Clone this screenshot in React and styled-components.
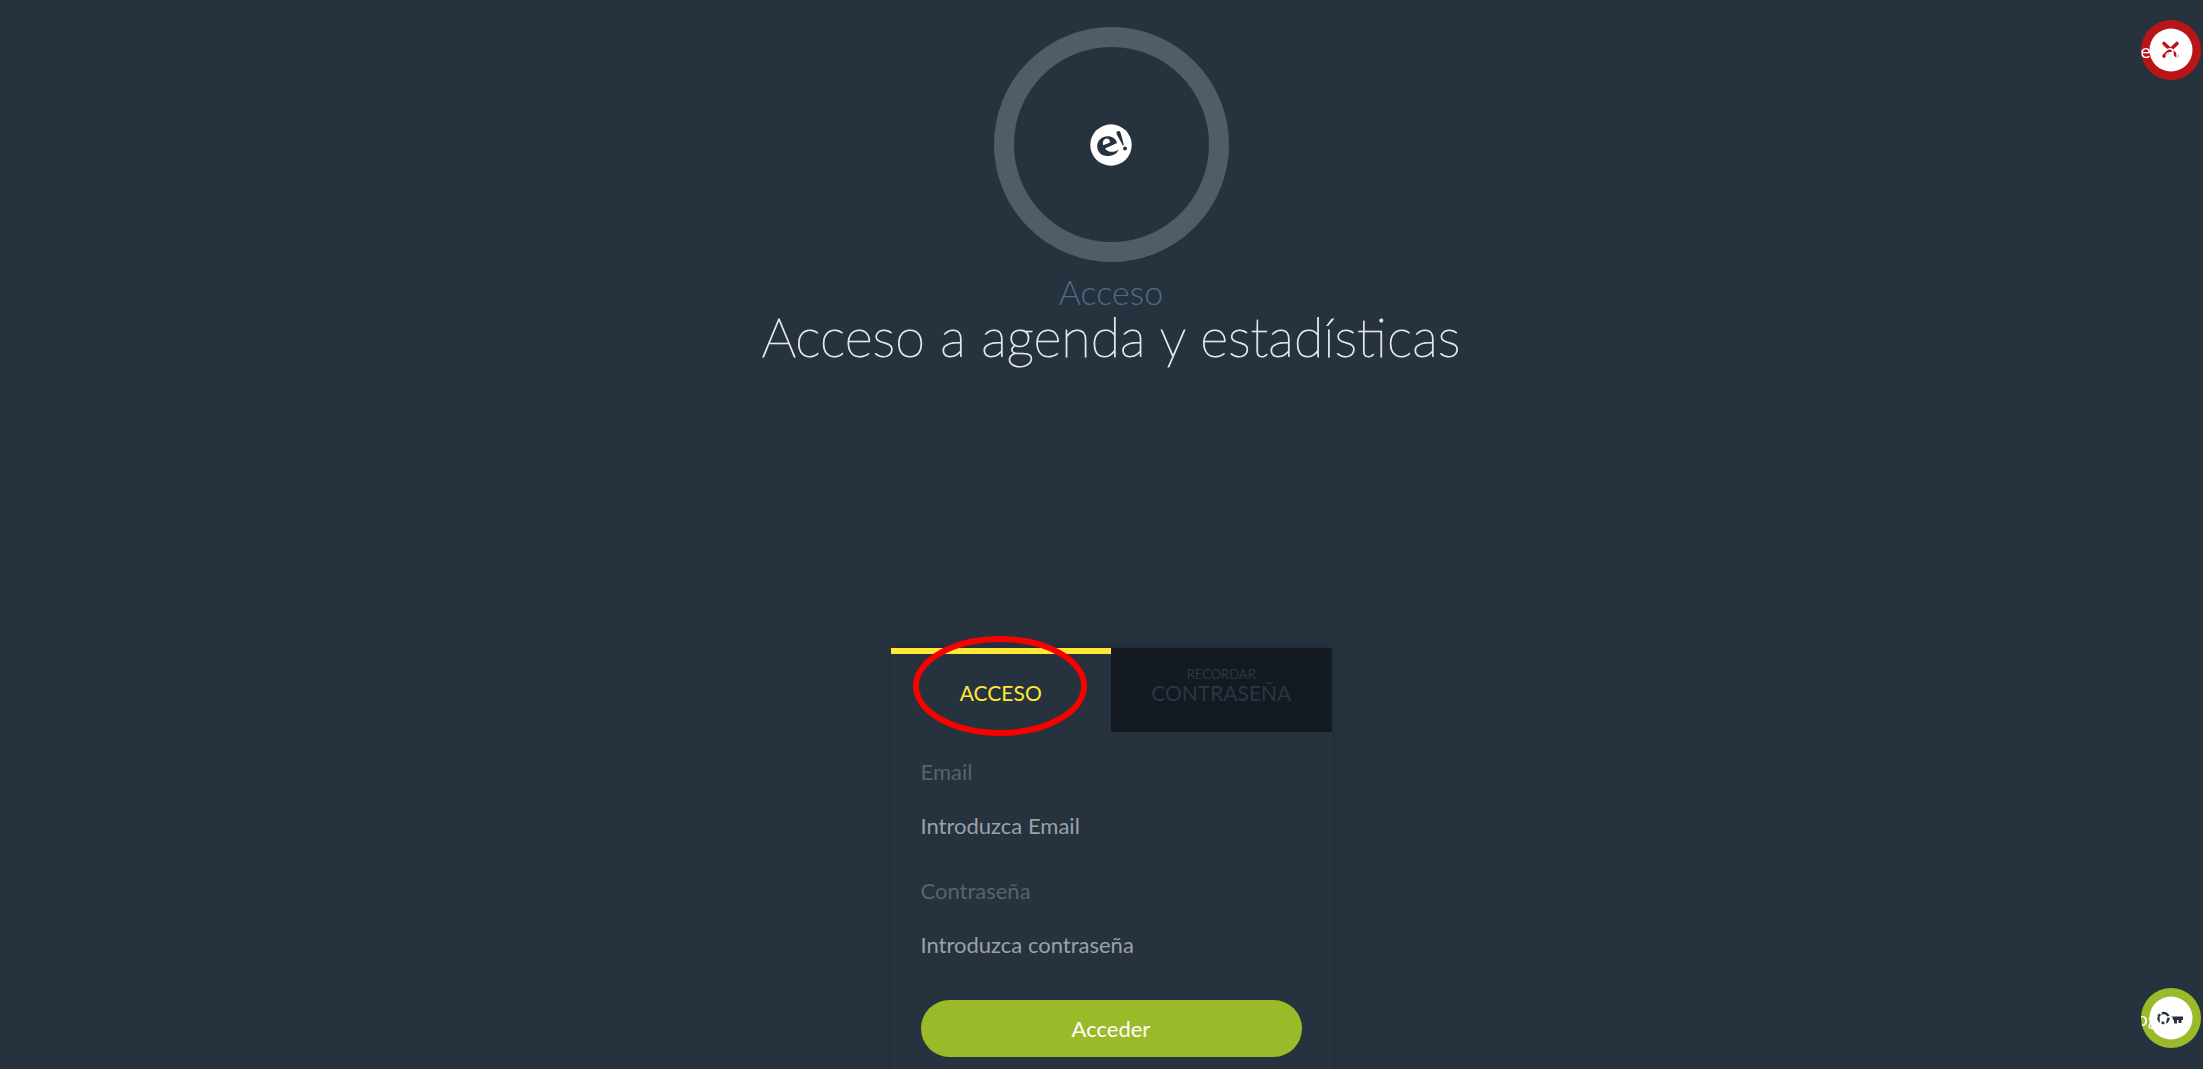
import React from 'react';
import styled, { createGlobalStyle } from 'styled-components'

const GlobalStyle = createGlobalStyle`
    * {
        box-sizing: border-box;
    }
    body {
        margin: 0;
        background-color: #26323e;
        font-family: Lato, sans-serif;
        font-size: 22px;
        overflow: hidden;
    }
`
const Page = styled.div`
    display: flex;
    flex-direction: column;
    align-items: center;
    min-height: 100vh;
    padding: 27px 0 0 19px;
    overflow: hidden;
`
const Header = styled.header`
    display: flex;
    flex-direction: column;
    align-items: center;
    text-align: center;
`
const LogoRing = styled.div`
    display: flex;
    align-items: center;
    justify-content: center;
    width: 235px;
    height: 235px;
    border: 20px solid #515c65;
    border-radius: 50%;
`
const Subtitle = styled.p`
    margin: 12px 0 0;
    font-size: 34px;
    font-weight: 300;
    line-height: 36px;
    color: #4b6d88;
`
const Title = styled.h1`
    margin: 0;
    font-size: 54px;
    font-weight: 100;
    line-height: 54px;
    color: #e4e7e9;
    -webkit-text-stroke: 1px #e4e7e9;
`
const Card = styled.main`
    width: 441px;
    margin-top: 284px;
    box-shadow: 0 0 10px rgba(0, 0, 0, 0.15);
`
const Tabs = styled.div`
    display: grid;
    grid-template-columns: 1fr 1fr;
`
const Tab = styled.button`
    position: relative;
    display: flex;
    flex-direction: column;
    align-items: center;
    height: 84px;
    padding: 20px 0 0;
    border: 0;
    border-top: 6px solid ${props => props.$active ? '#ffe836' : '#141a22'};
    background-color: ${props => props.$active ? 'transparent' : '#141a22'};
    color: ${props => props.$active ? '#ffe836' : '#2b3644'};
    font-family: inherit;
    font-size: 21px;
    line-height: 38px;
    text-transform: uppercase;
    cursor: pointer;
`
const TabHint = styled.small`
    font-size: 13px;
    line-height: 0;
`
const Highlight = styled.svg`
    position: absolute;
    top: -19px;
    left: 21px;
    width: 176px;
    height: 102px;
    overflow: visible;
    pointer-events: none;
`
const Form = styled.form`
    display: flex;
    flex-direction: column;
    padding: 20px 30px 40px;
`
const Label = styled.label`
    line-height: 40px;
    color: #5b6269;
`
const Input = styled.input`
    height: 40px;
    margin: 13px 0 26px;
    padding: 0;
    border: 0;
    outline: 0;
    background: transparent;
    color: #9aa2a8;
    font-family: inherit;
    font-size: 22px;

    &::placeholder {
        color: #9aa2a8;
        opacity: 1;
    }
`
const Submit = styled.button`
    height: 57px;
    margin-top: 10px;
    border: 0;
    border-radius: 29px;
    background-color: #9aba2a;
    color: #ffffff;
    font-family: inherit;
    font-size: 22px;
    cursor: pointer;
`
const RoundLink = styled.a`
    position: fixed;
    right: 2px;
    ${props => props.$bottom ? 'bottom: 21px;' : 'top: 20px;'}
    display: flex;
    align-items: center;
    justify-content: center;
    width: 60px;
    height: 60px;
    border-radius: 50%;
    background-color: ${props => props.$color};
    overflow: hidden;
    text-decoration: none;
`
const RoundLabel = styled.span`
    position: absolute;
    left: -14px;
    font-size: 20px;
    line-height: 60px;
    color: #ffffff;
`

const Logo = () => (
  <svg width="42" height="42" viewBox="0 0 42 42" role="img" aria-label="e!">
    <circle cx="21" cy="21" r="20.7" fill="#fff" />
    <path fill="#26323e" fillRule="evenodd" d="M27 19 C26 14.5 22 12.2 18 12.2 C11.5 12.2 7.2 17 7.2 22 C7.2 28 11.5 32 17 32 C23 32 28 29 28.5 25.4 C25 28.5 18 29 15 24.4 Z M13.3 21.3 L20 18.4 C20 15.5 18 14.2 16 14.7 C13.3 15.4 12.3 18 13.3 21.3 Z" />
    <path fill="#26323e" d="M26.5 9.5 C26 7 29.5 6 30.4 8.5 C31.5 12 33 17 33.8 21 L32.8 21.4 C31 17.5 28 13.5 26.5 9.5 Z" />
    <circle cx="35" cy="24.6" r="2" fill="#26323e" />
  </svg>
)

const CloseIcon = () => (
  <svg width="44" height="44" viewBox="0 0 44 44" aria-hidden="true">
    <circle cx="22" cy="22" r="21.5" fill="#fff" />
    <path d="M15 15.5 L28 28 M28 15.5 L15 28" stroke="#b81519" strokeWidth="3.6" strokeLinecap="round" />
  </svg>
)

const KeyIcon = () => (
  <svg width="44" height="44" viewBox="0 0 44 44" aria-hidden="true">
    <circle cx="22" cy="22" r="21.5" fill="#fff" />
    <circle cx="14.5" cy="22" r="5" fill="none" stroke="#26323e" strokeWidth="2.6" />
    <path d="M22 20.5 H34 V24 H32.5 V27 H29.5 V24 H28 V27.5 H25 V24 H22 Z" fill="#26323e" />
  </svg>
)

const App = () => {
  return (
    <Page>
      <GlobalStyle />
      <Header>
        <LogoRing><Logo /></LogoRing>
        <Subtitle>Acceso</Subtitle>
        <Title>Acceso a agenda y estadísticas</Title>
      </Header>
      <Card>
        <Tabs>
          <Tab type="button" $active>
            Acceso
            <Highlight viewBox="0 0 176 102" aria-hidden="true">
              <ellipse cx="88" cy="51" rx="84" ry="47" fill="none" stroke="#fb0000" strokeWidth="6" />
            </Highlight>
          </Tab>
          <Tab type="button">
            <TabHint>Recordar</TabHint>
            Contraseña
          </Tab>
        </Tabs>
        <Form>
          <Label htmlFor="email">Email</Label>
          <Input id="email" type="email" placeholder="Introduzca Email" />
          <Label htmlFor="password">Contraseña</Label>
          <Input id="password" type="password" placeholder="Introduzca contraseña" />
          <Submit type="submit">Acceder</Submit>
        </Form>
      </Card>
      <RoundLink href="#" $color="#b81519">
        <CloseIcon />
        <RoundLabel>Cerrar</RoundLabel>
      </RoundLink>
      <RoundLink href="#" $color="#9aba2a" $bottom>
        <KeyIcon />
        <RoundLabel>Login</RoundLabel>
      </RoundLink>
    </Page>
  )
}

export default App;
